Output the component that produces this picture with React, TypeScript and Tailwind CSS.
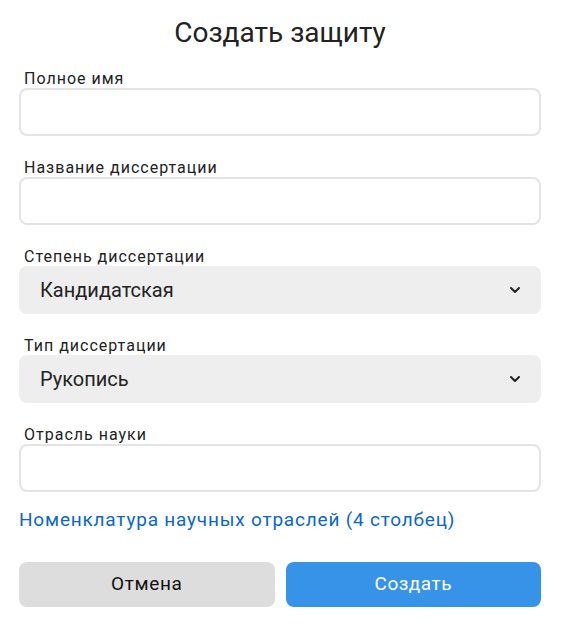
import React, { useState } from 'react'

const Chevron = () => (
  <svg width="12" height="8" viewBox="0 0 12 8" fill="none" className="shrink-0">
    <path d="M2 2l4 4 4-4" stroke="#222" strokeWidth="2" strokeLinecap="round" strokeLinejoin="round" />
  </svg>
)

const Field: React.FunctionComponent<{ label: string }> = ({ label }) => (
  <div className="flex flex-col">
    <label className="pl-[5px] text-[16px] leading-[19px] tracking-[1px] text-[#222]">{label}</label>
    <input
      type="text"
      className="h-[48px] w-full rounded-[8px] border-2 border-[#e3e3e8] bg-white px-3 text-[18px] outline-none"
    />
  </div>
)

const SelectField: React.FunctionComponent<{ label: string; value: string }> = ({ label, value }) => (
  <div className="flex flex-col">
    <label className="pl-[5px] text-[16px] leading-[19px] tracking-[1px] text-[#222]">{label}</label>
    <div className="flex h-[48px] items-center justify-between rounded-[8px] bg-[#eeeeee] pl-[21px] pr-[20px]">
      <span className="text-[20px] text-[#222]">{value}</span>
      <Chevron />
    </div>
  </div>
)

export default function App() {
  const [degree] = useState('Кандидатская')
  const [type] = useState('Рукопись')

  return (
    <div className="h-[632px] w-[562px] bg-white font-['Roboto',sans-serif]">
      <div className="flex flex-col pl-[19px] pr-[21px] pt-[16px]">
        <h1 className="text-center text-[28px] leading-[34px] text-[#222]">Создать защиту</h1>

        <div className="mt-[19px] flex flex-col gap-[22px]">
          <Field label="Полное имя" />
          <Field label="Название диссертации" />
          <SelectField label="Степень диссертации" value={degree} />
          <SelectField label="Тип диссертации" value={type} />
          <Field label="Отрасль науки" />
        </div>

        <a href="#" className="mt-[16px] text-[19px] leading-[24px] tracking-[0.8px] text-[#0b67c8]">
          Номенклатура научных отраслей (4 столбец)
        </a>

        <div className="mt-[30px] flex gap-[11px]">
          <button className="h-[45px] flex-1 rounded-[8px] bg-[#dddddd] text-[19px] tracking-[0.6px] text-[#111]">
            Отмена
          </button>
          <button className="h-[45px] flex-1 rounded-[8px] bg-[#3793e8] text-[19px] tracking-[0.5px] text-white">
            Создать
          </button>
        </div>
      </div>
    </div>
  )
}
